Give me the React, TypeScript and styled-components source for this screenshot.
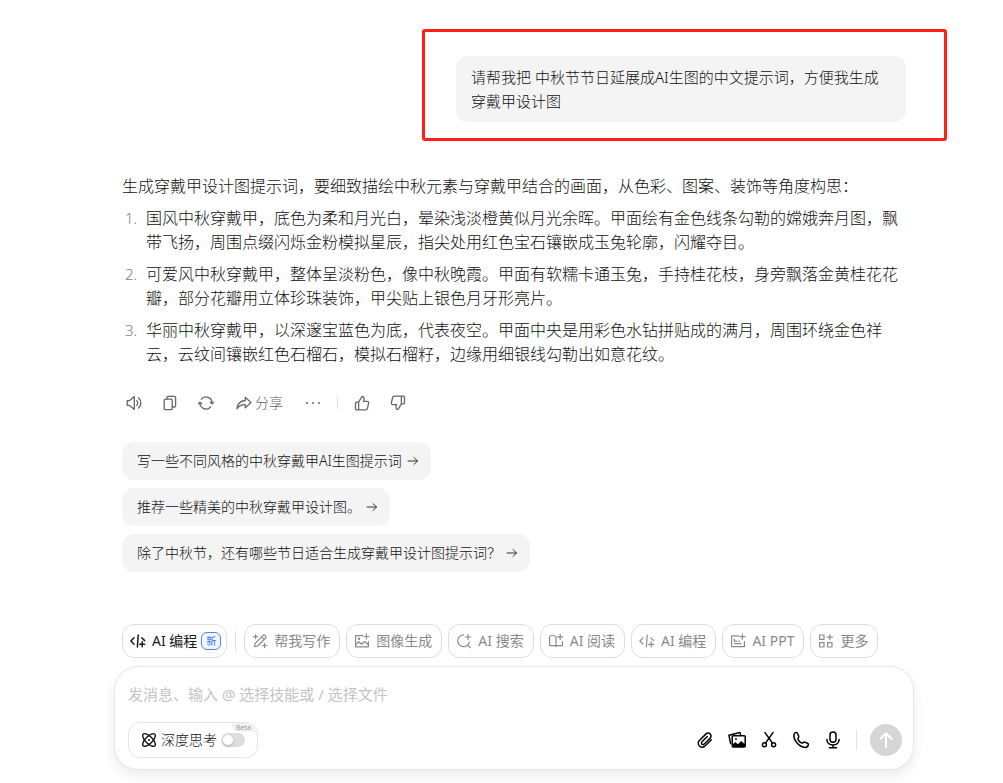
import React from 'react';
import styled, { createGlobalStyle, css } from 'styled-components';

const GlobalStyle = createGlobalStyle`
  *, *::before, *::after { box-sizing: border-box; }
  body {
    margin: 0;
    background: #fff;
    color: #111;
    font-family: "Noto Sans", "Noto Sans CJK SC", sans-serif;
    font-weight: 300;
    font-size: 16px;
    line-height: 24px;
  }
  button, textarea, input { font: inherit; color: inherit; margin: 0; }
  button { cursor: pointer; }
`;

const Page = styled.div`
  min-height: 100vh;
  display: flex;
  flex-direction: column;
  align-items: center;
  padding: 56px 0 13px 25px;
`;

const Column = styled.main`
  width: 100%;
  max-width: 800px;
  flex: 1;
  display: flex;
  flex-direction: column;
`;

const Thread = styled.div`
  flex: 1;
  display: flex;
  flex-direction: column;
  padding: 0 8px;
`;

const Highlight = styled.div`
  position: relative;
  align-self: flex-end;
  width: 450px;
  max-width: 100%;
  &::after {
    content: "";
    position: absolute;
    inset: -27px -41px -19px -34px;
    border: 3px solid #ff2116;
    border-radius: 3px;
    pointer-events: none;
  }
`;

const UserBubble = styled.p`
  margin: 0;
  padding: 9px 15px;
  border-radius: 12px;
  background: #f4f4f4;
  font-size: 15px;
`;

const Answer = styled.section`
  display: flex;
  flex-direction: column;
  gap: 8px;
  margin-top: 52px;
`;

const Paragraph = styled.p`
  margin: 0;
`;

const List = styled.ol`
  margin: 0;
  padding: 0 0 0 24px;
  display: flex;
  flex-direction: column;
  gap: 8px;
  list-style: none;
  counter-reset: item;
`;

const Item = styled.li`
  display: flex;
  counter-increment: item;
  &::before {
    content: counter(item) ".";
    flex: none;
    width: 24px;
    margin-left: -24px;
    padding-left: 3px;
    font-size: 15px;
    color: #808080;
  }
`;

const Actions = styled.div`
  display: flex;
  align-items: center;
  height: 24px;
  gap: 12px;
  margin-top: 25px;
`;

const ActionButton = styled.button<{ $labelled?: boolean }>`
  display: flex;
  align-items: center;
  justify-content: center;
  gap: 3px;
  min-width: 24px;
  height: 24px;
  padding: 0 ${p => (p.$labelled ? 6 : 0)}px;
  border: 0;
  background: none;
  font-size: 14px;
  color: #666;
`;

const Divider = styled.span<{ $h: number; $space?: number }>`
  flex: none;
  width: 1px;
  height: ${p => p.$h}px;
  margin: 0 ${p => p.$space ?? 0}px;
  background: #e0e0e0;
`;

const Suggestions = styled.div`
  display: flex;
  flex-direction: column;
  align-items: flex-start;
  gap: 8px;
  margin: 27px 0 52px;
`;

const Suggestion = styled.button`
  display: flex;
  align-items: center;
  gap: 4px;
  min-height: 38px;
  padding: 0 11px 0 15px;
  border: 0;
  border-radius: 12px;
  background: #f4f4f4;
  font-size: 14px;
  text-align: left;
`;

const Skills = styled.nav`
  display: flex;
  align-items: center;
  gap: 6px;
  padding: 0 8px;
  margin-bottom: 8px;
`;

const Chip = styled.button<{ $active?: boolean }>`
  display: flex;
  align-items: center;
  gap: 6px;
  flex: none;
  height: 34px;
  padding: 0 9px 0 7px;
  border: 1px solid #dedede;
  border-radius: 12px;
  background: #fff;
  font-size: 14px;
  font-weight: 400;
  white-space: nowrap;
  color: #8a8a8a;
  ${p => p.$active && css`
    padding-right: 5px;
    color: #1a1a1a;
  `}
`;

const Badge = styled.span`
  margin-left: -2px;
  padding: 0 4px;
  border: 1px solid #4a86ff;
  border-radius: 6px;
  background: #f1f6ff;
  color: #2f74ff;
  font-size: 10px;
  line-height: 16px;
`;

const Composer = styled.form`
  display: flex;
  flex-direction: column;
  gap: 16px;
  padding: 15px 11px 11px 13px;
  border: 1px solid #e6e6e6;
  border-radius: 24px;
  background: #fff;
  box-shadow: 0 6px 12px rgba(40, 60, 90, 0.09);
`;

const Input = styled.textarea`
  display: block;
  width: 100%;
  height: 24px;
  padding: 0;
  border: 0;
  outline: 0;
  resize: none;
  overflow: hidden;
  background: none;
  font-size: 15px;
  font-weight: 400;
  &::placeholder { color: #c4c4c4; opacity: 1; }
`;

const Toolbar = styled.div`
  display: flex;
  align-items: center;
  justify-content: space-between;
`;

const DeepThink = styled.label`
  position: relative;
  display: flex;
  align-items: center;
  gap: 4px;
  height: 36px;
  padding: 0 12px;
  border: 1px solid #e6e6e6;
  border-radius: 12px;
  overflow: hidden;
  font-size: 14px;
  cursor: pointer;
`;

const Beta = styled.span`
  position: absolute;
  top: 0;
  right: 0;
  padding: 0 6px 0 4px;
  border-bottom-left-radius: 6px;
  background: #f2f2f2;
  color: #9a9a9a;
  font: 400 7px/9px "Noto Sans", sans-serif;
`;

const Switch = styled.input`
  appearance: none;
  width: 24px;
  height: 14px;
  border-radius: 7px;
  background: #dedede;
  cursor: pointer;
  &::before {
    content: "";
    display: block;
    width: 10px;
    height: 10px;
    margin: 2px;
    border-radius: 50%;
    background: #fff;
    box-shadow: 0 2px 3px rgba(0, 0, 0, 0.15);
  }
  &:checked { background: #2f74ff; }
  &:checked::before { margin-left: 12px; }
`;

const Tools = styled.div`
  display: flex;
  align-items: center;
  gap: 12px;
`;

const ToolButton = styled.button`
  display: grid;
  place-items: center;
  width: 20px;
  height: 20px;
  padding: 0;
  border: 0;
  background: none;
  color: #000;
`;

const Send = styled.button`
  display: grid;
  place-items: center;
  width: 32px;
  height: 32px;
  padding: 0;
  border: 0;
  border-radius: 50%;
  background: #d6d6d6;
  color: #fff;
`;

const Svg = styled.svg`
  display: block;
  flex: none;
  fill: none;
  stroke: currentColor;
  stroke-linecap: round;
  stroke-linejoin: round;
`;

type IconProps = { size?: number; w?: number; children: React.ReactNode };
const Icon = ({ size = 16, w = 1.2, children }: IconProps) => (
  <Svg width={size} height={size} viewBox={`0 0 ${size} ${size}`} strokeWidth={w} aria-hidden="true">
    {children}
  </Svg>
);

const Speaker = () => (
  <Icon w={1.3}>
    <path d="M1.2 5.6h2.5L8.3 1.6v12.8l-4.6-4H1.2z" />
    <path d="M10.6 5.6a3.4 3.4 0 0 1 0 4.8M12.6 3a6.800 6.800 0 0 1 0 10" />
  </Icon>
);
const Copy = () => (
  <Icon w={1.3}>
    <rect x="2.2" y="4.2" width="8" height="10.4" rx="1.2" />
    <path d="M5 4V2.600c0-.7.5-1.200 1.200-1.200h6.200c.7 0 1.200.5 1.200 1.200v8.200c0 .7-.5 1.200-1.200 1.200h-2" />
  </Icon>
);
const Refresh = () => (
  <Icon w={1.3}>
    <path d="M3.400 4.200A6 6 0 0 1 14 8.400M12.600 11.800A6 6 0 0 1 2 7.600" />
    <path d="M.5 8.800 2 7.200l1.800 1.500M12.200 7.300 14 8.800l1.500-1.600" />
  </Icon>
);
const Share = () => (
  <Icon w={1.3}>
    <path d="M9.300 2.200 15 7.600l-5.700 5.200V9.700C5.800 9.400 3.200 10.600.9 13.800 1.200 9.300 4.200 6 9.300 5.500z" />
  </Icon>
);
const More = () => (
  <Icon>
    <g fill="currentColor" stroke="none">
      <circle cx="2" cy="8" r="1" /><circle cx="8" cy="8" r="1" /><circle cx="14" cy="8" r="1" />
    </g>
  </Icon>
);
const thumb = (
  <path d="M4.600 7.200H2.500c-.6 0-1 .4-1 1v5.600c0 .6.4 1 1 1h2.100zM4.600 7.200 8 1.500c1.400 0 2.300 1 2 2.400l-.5 2.500h3.800c.9 0 1.500.8 1.300 1.700l-1.200 5.400c-.2.800-.8 1.300-1.600 1.300H4.600z" />
);
const ThumbUp = () => <Icon w={1.3}>{thumb}</Icon>;
const ThumbDown = () => <Icon w={1.3}><g transform="rotate(180 8 8)">{thumb}</g></Icon>;
const Arrow = () => (
  <Svg width="14" height="14" viewBox="0 0 14 14" strokeWidth="1" aria-hidden="true">
    <path d="M2 7h9.500M8 3.600 11.500 7 8 10.400" stroke="#333" />
  </Svg>
);
const Code = ({ w = 1.2 }: { w?: number }) => (
  <Icon w={w}>
    <path d="M4 4.800.9 8 4 11.200M8.200 2 7.400 14M11.800 4.800 14.600 7.600M12.200 8.800v5M9.700 11.300h5" />
  </Icon>
);
const Write = () => (
  <Icon>
    <path d="m2.600 13.600.5-3.200 8-8c.5-.5 1.200-.5 1.700 0l.9.9c.5.5.5 1.200 0 1.700l-8 8zM9.800 4.200l2.200 2.200M3.600 1.600v4M1.600 3.600h4M12.600 10.400v4.200M10.500 12.500h4.200" />
  </Icon>
);
const Picture = () => (
  <Icon>
    <path d="M8.500 2.700H1.600v11.100h12.800V8.500M12.400 1v5M9.900 3.500h5M1.800 11.700l3-3 2.700 2.500 3.200-2.700 3.500 3" />
    <circle cx="5" cy="5.800" r=".6" />
  </Icon>
);
const Search = () => (
  <Icon>
    <path d="M7.800 1.900a5.900 5.900 0 1 0 5.600 7.200M11.600 11.900l2.800 2.700M12 1.500v5M9.500 4h5" />
  </Icon>
);
const Read = () => (
  <Icon>
    <path d="M8 13.200V4.200C7.400 2.900 6 2.400 4 2.500c-1.500 0-2.400.7-2.400 2v8.200h4.600c.9 0 1.500.3 1.800.9.300-.6.900-.9 1.800-.9h4.700V8.700M12.200 1.300v5.200M9.600 3.900h5.200" />
  </Icon>
);
const Slides = () => (
  <Icon>
    <path d="M8.500 2.900H1.600v10.800h12.800V8.500M12.400 1.200v5M9.900 3.700h5M4.500 10.600h6.500M4.400 6v2.200h2.300M8.800 8.200h.6" />
  </Icon>
);
const Grid = () => (
  <Icon>
    <rect x="1.600" y="2" width="4.400" height="4.400" /><rect x="1.600" y="9.600" width="4.400" height="4.400" />
    <rect x="9.600" y="9.600" width="4.400" height="4.400" /><path d="M11.800 1.600v5.200M9.200 4.200h5.200" />
  </Icon>
);
const Atom = () => (
  <Icon w={1.4}>
    <ellipse cx="8" cy="8" rx="8.300" ry="3.500" transform="rotate(45 8 8)" />
    <ellipse cx="8" cy="8" rx="8.300" ry="3.500" transform="rotate(-45 8 8)" />
    <circle cx="8" cy="8" r="1" fill="currentColor" stroke="none" />
  </Icon>
);
const Clip = () => (
  <Icon size={20} w={1.5}>
    <path d="m16.300 9.700-6 6c-1.800 1.800-4.300 1.800-5.900.3-1.600-1.600-1.500-4.100.2-5.800l6.200-6.100c1.300-1.300 3.200-1.300 4.400-.1 1.200 1.200 1.100 3-.1 4.200l-5.800 5.800c-.7.7-1.700.8-2.400.1-.7-.7-.6-1.700.1-2.400l5.300-5.200" />
  </Icon>
);
const Gallery = () => (
  <Icon size={20} w={1.5}>
    <path d="M3.600 13.600 1.900 5.200 13 2.600l.5 1.800" />
    <rect x="5.200" y="5.800" width="13" height="11.200" rx="1" />
    <path d="M5.200 14.400 8.400 12l2.400 2.200 3.400-3.200 4 3.600V17h-13z" fill="currentColor" stroke="none" />
    <circle cx="9" cy="9" r=".9" fill="currentColor" stroke="none" />
  </Icon>
);
const Cut = () => (
  <Icon size={20} w={1.5}>
    <circle cx="5.400" cy="14.800" r="2" /><circle cx="14.600" cy="14.800" r="2" />
    <path d="M6 2.600 13.500 13.100M14 2.600 6.500 13.100" />
  </Icon>
);
const Phone = () => (
  <Icon size={20} w={1.5}>
    <path d="M3 4.500c.2-1.300 1.500-2 2.500-1.900.6.100.9.600 1.200 1.200l1 2.300c.3.700.1 1.200-.4 1.700-.6.700-.6 1.200-.1 2 .8 1.300 1.800 2.300 3.100 3 .8.500 1.300.4 1.900-.2.500-.5 1-.8 1.700-.5l2.500 1.100c.8.400 1.200.8 1 1.600-.4 1.500-1.600 2.600-3.200 2.600C8.300 17.200 2.200 10.200 3 4.500z" />
  </Icon>
);
const Mic = () => (
  <Icon size={20} w={1.5}>
    <rect x="7" y="1.900" width="6" height="10.400" rx="3" />
    <path d="M3.900 9.500c.2 3.300 2.700 5.400 6.100 5.400s5.900-2.100 6.100-5.400M10 15v2.500M6.400 17.700h7.200" />
  </Icon>
);
const Up = () => (
  <Icon size={20} w={2}>
    <path d="M10 17V3.400M4.400 8.800 10 3.200l5.600 5.600" />
  </Icon>
);

const items = [
  '国风中秋穿戴甲，底色为柔和月光白，晕染浅淡橙黄似月光余晖。甲面绘有金色线条勾勒的嫦娥奔月图，飘带飞扬，周围点缀闪烁金粉模拟星辰，指尖处用红色宝石镶嵌成玉兔轮廓，闪耀夺目。',
  '可爱风中秋穿戴甲，整体呈淡粉色，像中秋晚霞。甲面有软糯卡通玉兔，手持桂花枝，身旁飘落金黄桂花花瓣，部分花瓣用立体珍珠装饰，甲尖贴上银色月牙形亮片。',
  '华丽中秋穿戴甲，以深邃宝蓝色为底，代表夜空。甲面中央是用彩色水钻拼贴成的满月，周围环绕金色祥云，云纹间镶嵌红色石榴石，模拟石榴籽，边缘用细银线勾勒出如意花纹。',
];

const suggestions = [
  '写一些不同风格的中秋穿戴甲AI生图提示词',
  '推荐一些精美的中秋穿戴甲设计图。',
  '除了中秋节，还有哪些节日适合生成穿戴甲设计图提示词？',
];

const skills = [
  { label: '帮我写作', icon: <Write /> },
  { label: '图像生成', icon: <Picture /> },
  { label: 'AI 搜索', icon: <Search /> },
  { label: 'AI 阅读', icon: <Read /> },
  { label: 'AI 编程', icon: <Code /> },
  { label: 'AI PPT', icon: <Slides /> },
  { label: '更多', icon: <Grid /> },
];

const tools = [
  { label: '上传文件', icon: <Clip /> },
  { label: '图片', icon: <Gallery /> },
  { label: '截图', icon: <Cut /> },
  { label: '语音通话', icon: <Phone /> },
  { label: '语音输入', icon: <Mic /> },
];

export default function App() {
  return (
    <>
      <GlobalStyle />
      <Page>
        <Column>
          <Thread>
            <Highlight>
              <UserBubble>请帮我把 中秋节节日延展成AI生图的中文提示词，方便我生成穿戴甲设计图</UserBubble>
            </Highlight>
            <Answer>
              <Paragraph>生成穿戴甲设计图提示词，要细致描绘中秋元素与穿戴甲结合的画面，从色彩、图案、装饰等角度构思：</Paragraph>
              <List>
                {items.map(t => <Item key={t}>{t}</Item>)}
              </List>
            </Answer>
            <Actions>
              <ActionButton type="button" aria-label="朗读"><Speaker /></ActionButton>
              <ActionButton type="button" aria-label="复制"><Copy /></ActionButton>
              <ActionButton type="button" aria-label="重新生成"><Refresh /></ActionButton>
              <ActionButton type="button" $labelled><Share />分享</ActionButton>
              <ActionButton type="button" aria-label="更多"><More /></ActionButton>
              <Divider $h={12} />
              <ActionButton type="button" aria-label="赞"><ThumbUp /></ActionButton>
              <ActionButton type="button" aria-label="踩"><ThumbDown /></ActionButton>
            </Actions>
            <Suggestions>
              {suggestions.map(t => (
                <Suggestion key={t} type="button">{t}<Arrow /></Suggestion>
              ))}
            </Suggestions>
          </Thread>
          <Skills>
            <Chip type="button" $active><Code w={1.5} />AI 编程<Badge>新</Badge></Chip>
            <Divider $h={20} $space={2} />
            {skills.map(s => (
              <Chip key={s.label} type="button">{s.icon}{s.label}</Chip>
            ))}
          </Skills>
          <Composer onSubmit={e => e.preventDefault()}>
            <Input rows={1} aria-label="消息" placeholder="发消息、输入 @ 选择技能或 / 选择文件" />
            <Toolbar>
              <DeepThink>
                <Atom />深度思考
                <Switch type="checkbox" role="switch" />
                <Beta>Beta</Beta>
              </DeepThink>
              <Tools>
                {tools.map(t => (
                  <ToolButton key={t.label} type="button" aria-label={t.label}>{t.icon}</ToolButton>
                ))}
                <Divider $h={20} $space={1} />
                <Send type="submit" aria-label="发送"><Up /></Send>
              </Tools>
            </Toolbar>
          </Composer>
        </Column>
      </Page>
    </>
  );
}
